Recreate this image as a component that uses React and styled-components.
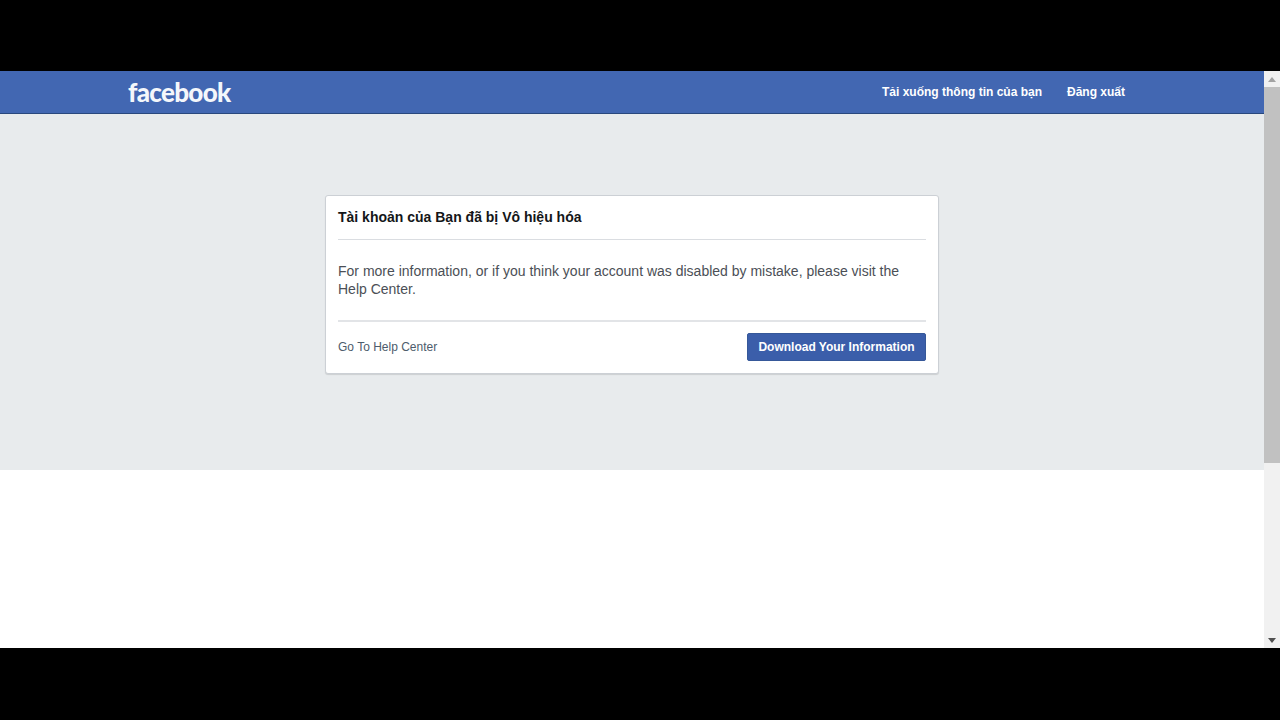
import React from "react";
import styled, { createGlobalStyle } from "styled-components";

const GlobalStyle = createGlobalStyle`
  html, body {
    margin: 0;
    padding: 0;
    height: 100%;
    overflow: hidden;
    background: #000;
  }
  body {
    font-family: "Liberation Sans", Arial, sans-serif;
  }
`;

const Screen = styled.div`
  width: 1280px;
  height: 720px;
  display: flex;
  flex-direction: column;
  justify-content: space-between;
  background: #000;
`;

const LetterBox = styled.div`
  height: ${(p) => p.$h}px;
  flex: none;
  background: #000;
`;

const Browser = styled.div`
  height: 577px;
  flex: none;
  display: flex;
  background: #fff;
`;

const Page = styled.div`
  flex: 1;
  display: flex;
  flex-direction: column;
`;

const Header = styled.header`
  height: 43px;
  box-sizing: border-box;
  flex: none;
  display: flex;
  align-items: center;
  justify-content: space-between;
  padding: 0 139px 0 128px;
  background: #4267b2;
  border-bottom: 1px solid #29487d;
`;

const Logo = styled.a`
  font-family: Lato, sans-serif;
  font-size: 26px;
  font-weight: 900;
  letter-spacing: -0.7px;
  line-height: 42px;
  color: #f4f7fb;
`;

const Nav = styled.nav`
  display: flex;
  gap: 25px;
`;

const NavLink = styled.a`
  font-size: 12px;
  font-weight: 700;
  color: #fff;
`;

const Main = styled.main`
  height: 356px;
  box-sizing: border-box;
  flex: none;
  padding-top: 81px;
  background: #e8ebed;
`;

const Card = styled.section`
  box-sizing: border-box;
  width: 614px;
  height: 179px;
  margin-left: 325px;
  padding: 0 12px;
  background: #fff;
  border: 1px solid #ccd0d5;
  border-radius: 3px;
  box-shadow: 0 1px 1px rgba(0, 0, 0, 0.12);
`;

const Title = styled.h2`
  margin: 0;
  height: 44px;
  line-height: 42px;
  box-sizing: border-box;
  border-bottom: 1px solid #dadde1;
  font-size: 14px;
  font-weight: 700;
  color: #141618;
`;

const Message = styled.p`
  margin: 0;
  height: 82px;
  box-sizing: border-box;
  padding-top: 22px;
  border-bottom: 2px solid #e2e4e7;
  font-size: 14px;
  line-height: 18px;
  color: #4b4f56;
`;

const Footer = styled.div`
  display: flex;
  align-items: center;
  justify-content: space-between;
  padding-top: 11px;
`;

const HelpLink = styled.a`
  font-size: 12px;
  color: #4d5c6c;
`;

const Button = styled.button`
  width: 179px;
  height: 28px;
  padding: 0;
  background: #3b5eaa;
  border: 1px solid #365899;
  border-radius: 2px;
  font-family: inherit;
  font-size: 12px;
  font-weight: 700;
  color: #fff;
`;

const White = styled.div`
  flex: 1;
  background: #fff;
`;

const Scrollbar = styled.div`
  width: 16px;
  flex: none;
  display: flex;
  flex-direction: column;
  background: #f1f1f1;
`;

const Arrow = styled.div`
  height: 16px;
  flex: none;
  display: flex;
  align-items: center;
  justify-content: center;
`;

const Track = styled.div`
  flex: 1;
`;

const Thumb = styled.div`
  height: 376px;
  background: #c1c1c1;
`;

const ArrowIcon = ({ down }) => (
  <svg width="8" height="5" viewBox="0 0 8 5">
    <path
      d={down ? "M0 0H8L4 5Z" : "M0 5H8L4 0Z"}
      fill={down ? "#505050" : "#a3a3a3"}
    />
  </svg>
);

const App = () => {
  return (
    <Screen>
      <GlobalStyle />
      <LetterBox $h={71} />
      <Browser>
        <Page>
          <Header>
            <Logo>facebook</Logo>
            <Nav>
              <NavLink>Tải xuống thông tin của bạn</NavLink>
              <NavLink>Đăng xuất</NavLink>
            </Nav>
          </Header>
          <Main>
            <Card>
              <Title>Tài khoản của Bạn đã bị Vô hiệu hóa</Title>
              <Message>
                For more information, or if you think your account was disabled
                by mistake, please visit the Help Center.
              </Message>
              <Footer>
                <HelpLink>Go To Help Center</HelpLink>
                <Button>Download Your Information</Button>
              </Footer>
            </Card>
          </Main>
          <White />
        </Page>
        <Scrollbar>
          <Arrow>
            <ArrowIcon />
          </Arrow>
          <Track>
            <Thumb />
          </Track>
          <Arrow>
            <ArrowIcon down />
          </Arrow>
        </Scrollbar>
      </Browser>
      <LetterBox $h={72} />
    </Screen>
  );
};

export default App;
